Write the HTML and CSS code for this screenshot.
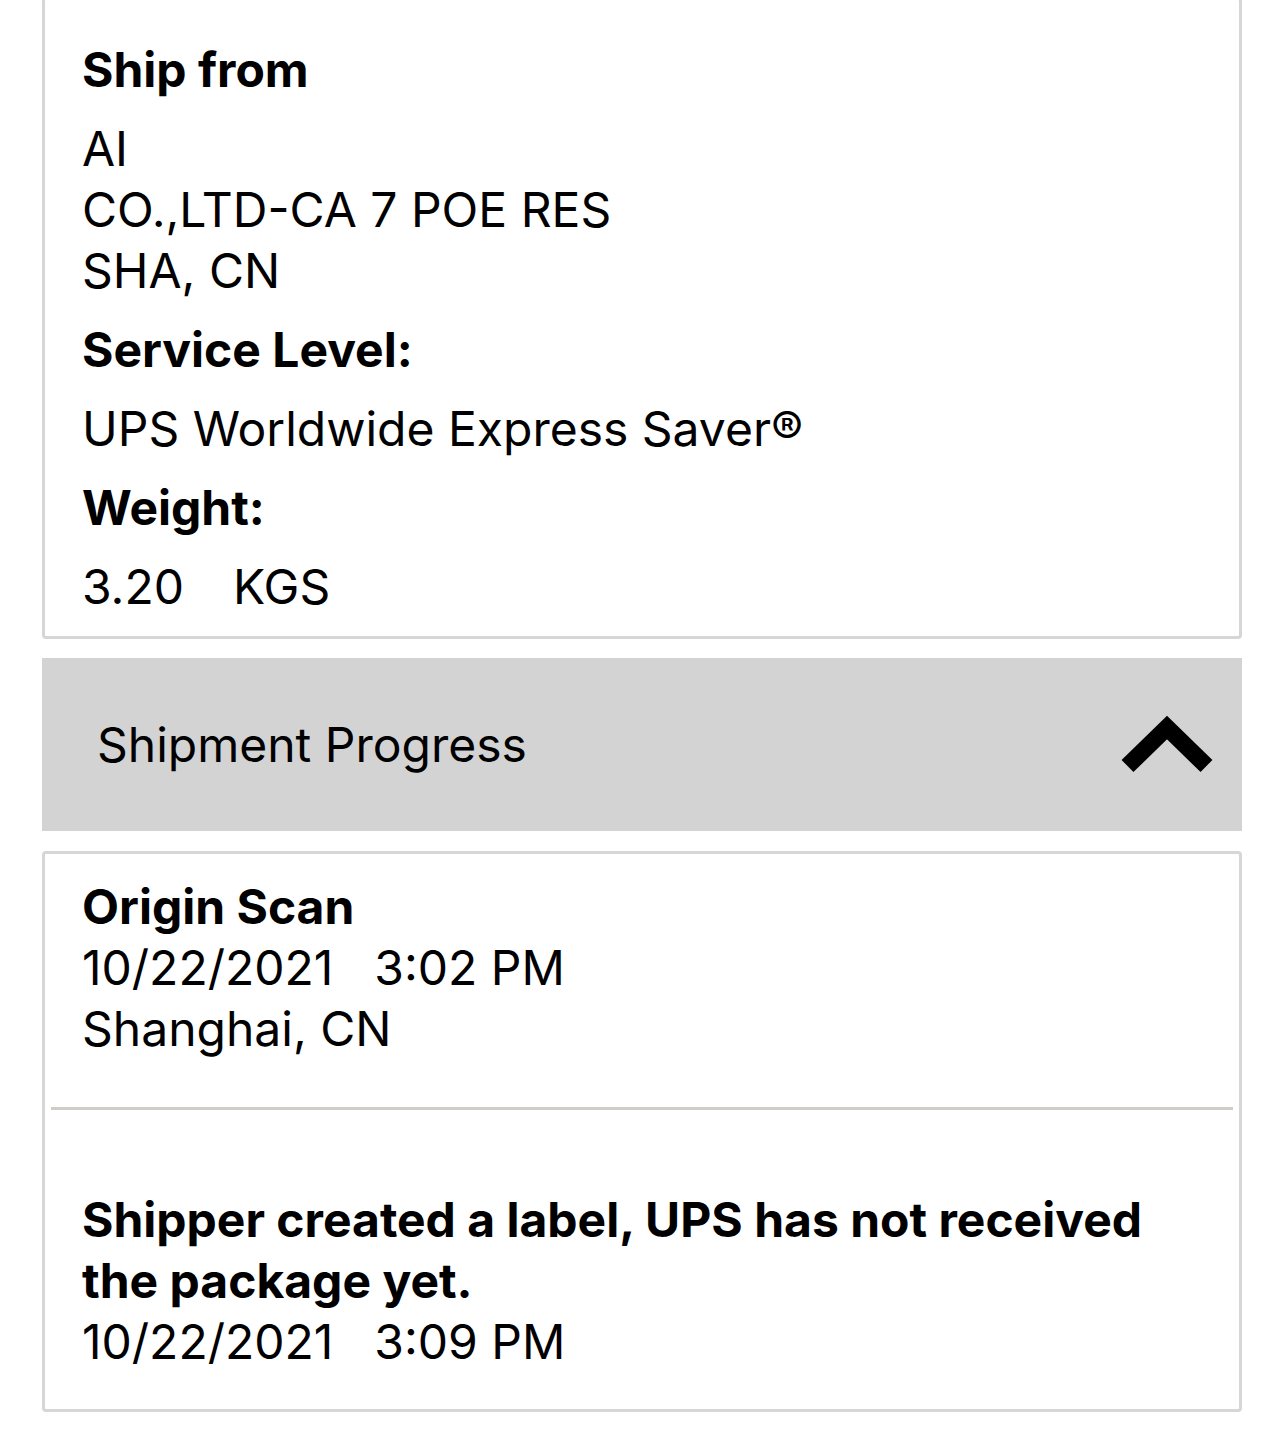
FILE: index.html
```html
<!DOCTYPE html>
<html lang="en">
<head>
<meta charset="utf-8">
<title>Shipment details</title>
<link rel="stylesheet" href="styles.css">
</head>
<body>
<main class="page">
  <section class="card card-details">
    <div class="group">
      <div class="label">Ship from</div>
    </div>
    <div class="group">
      <div class="value">AI</div>
      <div class="value">CO.,LTD-CA 7 POE RES</div>
      <div class="value">SHA, CN</div>
    </div>
    <div class="group">
      <div class="label">Service Level:</div>
    </div>
    <div class="group">
      <div class="value">UPS Worldwide Express Saver®</div>
    </div>
    <div class="group">
      <div class="label">Weight:</div>
    </div>
    <div class="group last">
      <div class="value"><span class="num">3.20</span><span>KGS</span></div>
    </div>
  </section>

  <header class="accordion">
    <span class="accordion-title">Shipment Progress</span>
    <svg class="chevron" width="100" height="66" viewBox="0 0 100 66" aria-hidden="true">
      <polyline points="9.5,55 49,16.5 88.5,55" fill="none" stroke="#000" stroke-width="17" stroke-linejoin="miter" stroke-linecap="butt"/>
    </svg>
  </header>

  <section class="card card-progress">
    <div class="event event-first">
      <div class="label">Origin Scan</div>
      <div class="value"><span class="date">10/22/2021</span><span>3:02 PM</span></div>
      <div class="value">Shanghai, CN</div>
    </div>
    <div class="divider"></div>
    <div class="event event-second">
      <div class="label">Shipper created a label, UPS has not received the package yet.</div>
      <div class="value"><span class="date">10/22/2021</span><span>3:09 PM</span></div>
    </div>
  </section>
</main>
</body>
</html>
```
FILE: styles.css
```css
html, body {
  margin: 0;
  padding: 0;
  background: #ffffff;
}

body {
  font-family: "Inter", "Liberation Sans", sans-serif;
  font-size: 48px;
  line-height: 61px;
  color: #000000;
  overflow: hidden;
}

.page {
  display: flex;
  flex-direction: column;
  width: 1200px;
  margin-left: 42px;
}

.card {
  border: 3px solid #d6d6d6;
  border-radius: 4px;
  background: #ffffff;
}

.card-details {
  margin-top: -3px;
  padding: 39px 37px 19px;
}

.group {
  margin-bottom: 18px;
}

.group.last {
  margin-bottom: 0;
}

.label {
  font-weight: 700;
}

.value {
  font-weight: 400;
}

.num {
  margin-right: 49px;
}

.date {
  margin-right: 41px;
}

.accordion {
  margin-top: 19px;
  height: 173px;
  background: #d3d3d3;
  display: flex;
  align-items: center;
  justify-content: space-between;
  padding: 0 24px 0 55px;
  box-sizing: border-box;
}

.accordion-title {
  font-weight: 400;
}

.chevron {
  display: block;
  margin-top: -1px;
}

.card-progress {
  margin-top: 20px;
  padding: 22px 0 37px;
}

.event {
  padding: 0 37px;
}

.divider {
  height: 3px;
  background: #d0ccc8;
  margin: 48px 6px 79px;
}
```
